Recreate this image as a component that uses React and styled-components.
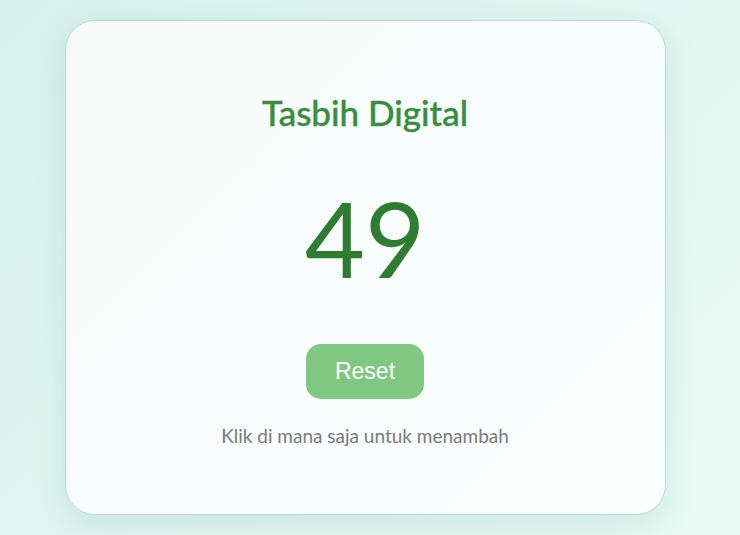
import React, { useState } from "react";
import styled, { createGlobalStyle } from "styled-components";

const GlobalStyle = createGlobalStyle`
  html, body {
    margin: 0;
    padding: 0;
  }
  body {
    font-family: "Lato", "Open Sans", sans-serif;
    background: linear-gradient(135deg, #d6f1ea 0%, #e3f7f1 60%, #e8fbf5 100%);
    min-height: 100vh;
  }
`;

const Page = styled.div`
  min-height: 535px;
  display: flex;
  align-items: center;
  justify-content: center;
  padding-right: 10px;
  box-sizing: border-box;
  cursor: pointer;
`;

const Card = styled.div`
  width: 601px;
  height: 495px;
  box-sizing: border-box;
  border: 1px solid #b4ddd8;
  border-radius: 30px;
  background: linear-gradient(135deg, #f6fbfa 0%, #f9fdfd 60%, #fbfefe 100%);
  box-shadow: 0 10px 30px rgba(80, 160, 140, 0.18);
  display: flex;
  flex-direction: column;
  align-items: center;
  padding-top: 70px;
`;

const Title = styled.h1`
  margin: 0;
  font-family: "Lato", sans-serif;
  font-size: 35px;
  font-weight: 500;
  color: #388e3c;
  line-height: 42px;
  -webkit-text-stroke: 0.4px #388e3c;
`;

const Count = styled.div`
  margin-top: 47px;
  font-family: "Lato", sans-serif;
  font-size: 104px;
  font-weight: 400;
  color: #2e7d32;
  line-height: 116px;
`;

const ResetButton = styled.button`
  margin-top: 48px;
  width: 118px;
  height: 55px;
  border: none;
  border-radius: 15px;
  background: #81c784;
  color: #ffffff;
  font-family: "Liberation Sans", Arial, sans-serif;
  font-size: 23px;
  cursor: pointer;
`;

const Hint = styled.p`
  margin: 27px 0 0;
  font-family: "Lato", sans-serif;
  font-size: 19px;
  color: #7a7a7a;
  line-height: 20px;
`;

export default function App() {
  const [count, setCount] = useState(49);

  return (
    <>
      <GlobalStyle />
      <Page onClick={() => setCount((c) => c + 1)}>
        <Card>
          <Title>Tasbih Digital</Title>
          <Count>{count}</Count>
          <ResetButton
            onClick={(e) => {
              e.stopPropagation();
              setCount(0);
            }}
          >
            Reset
          </ResetButton>
          <Hint>Klik di mana saja untuk menambah</Hint>
        </Card>
      </Page>
    </>
  );
}
